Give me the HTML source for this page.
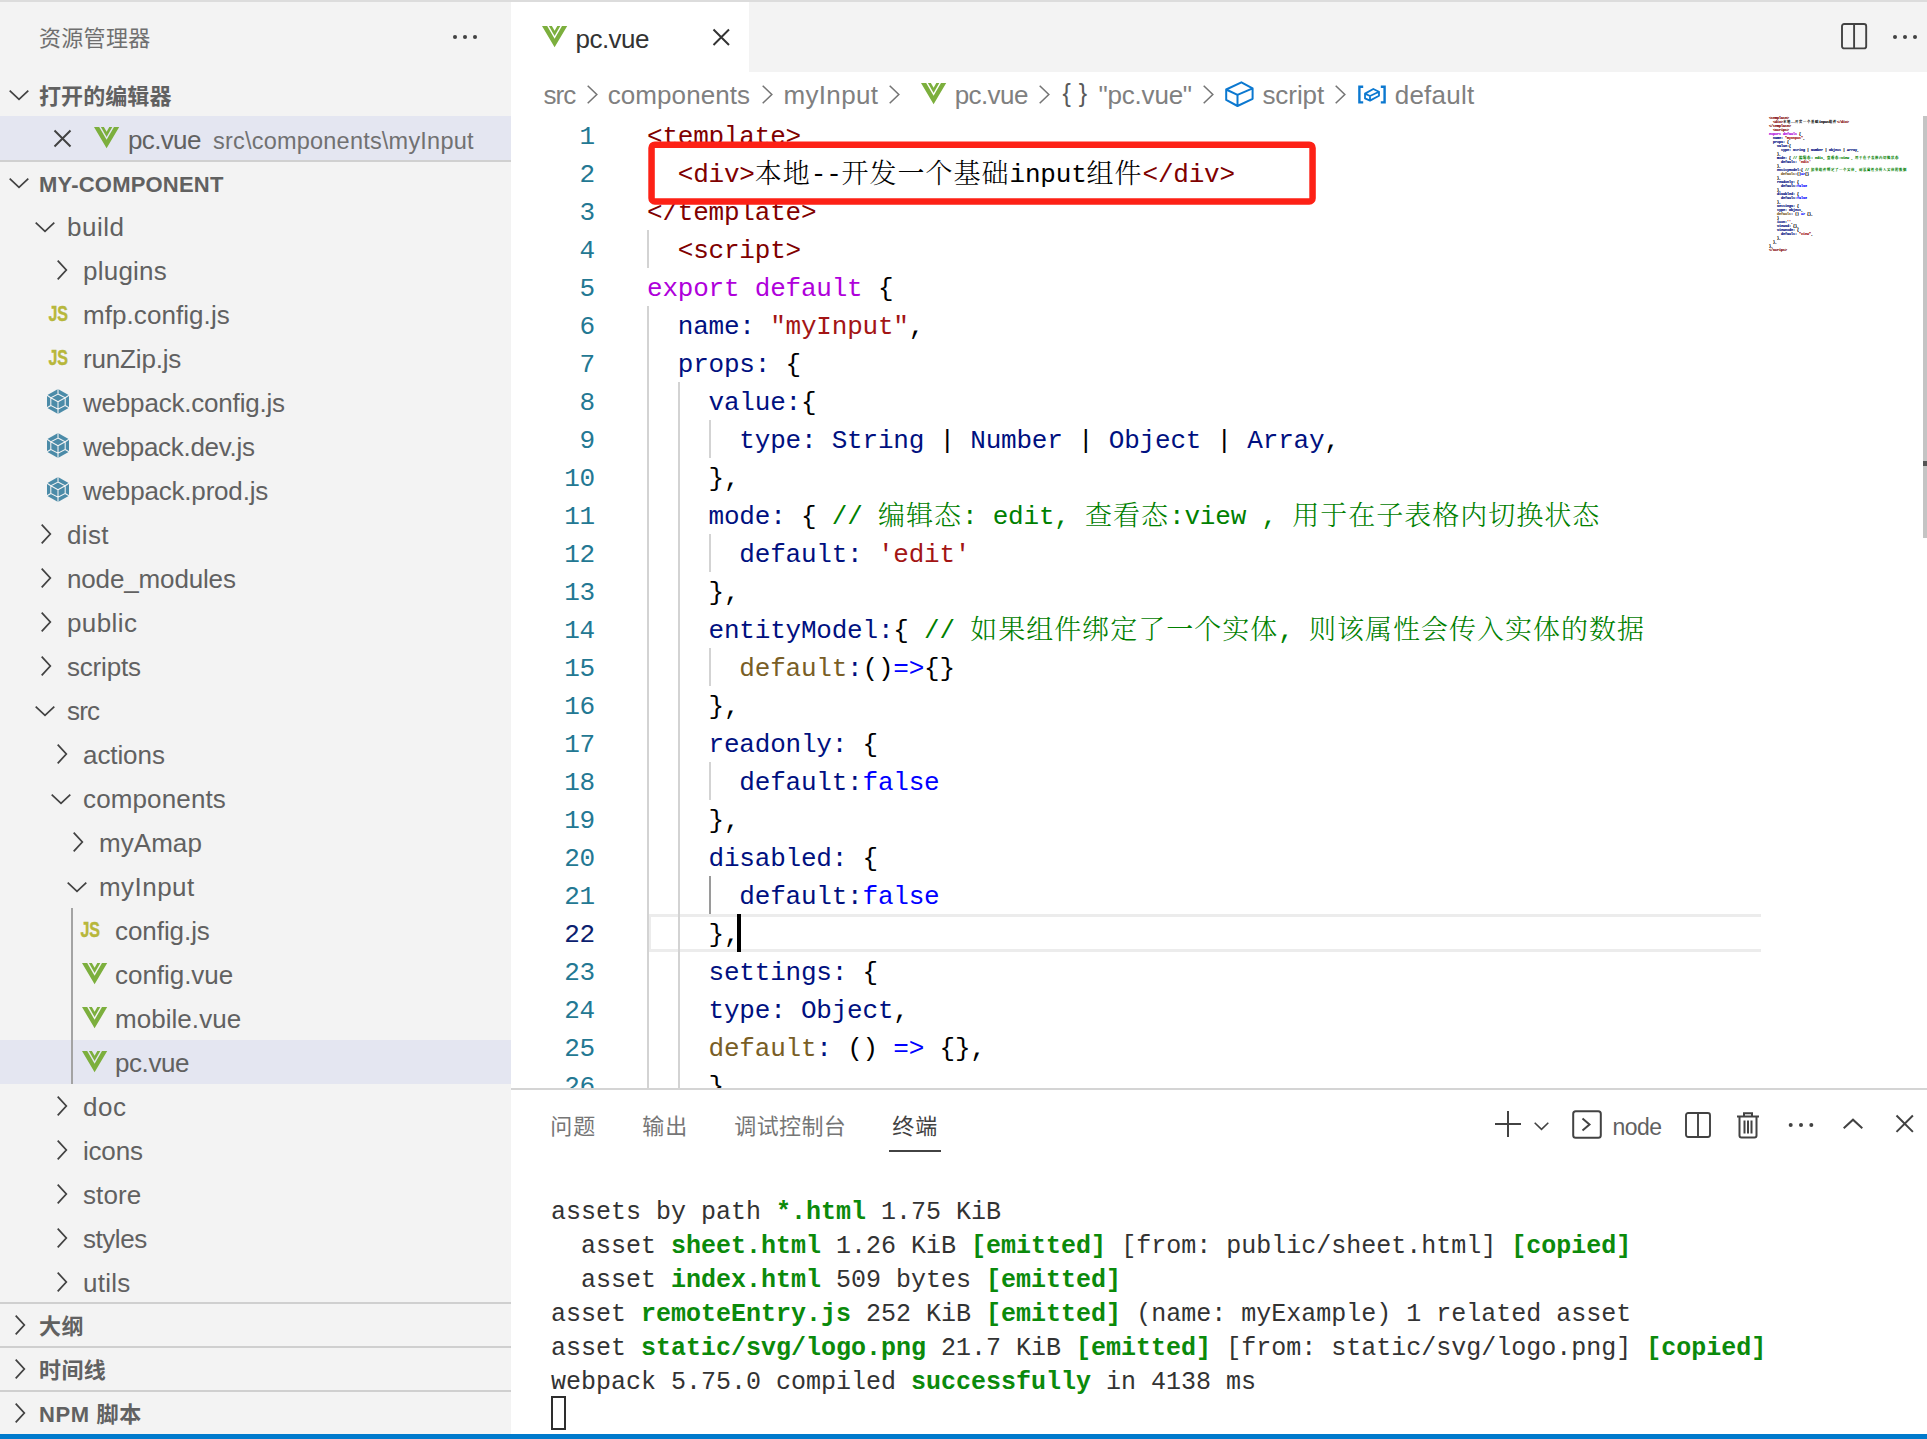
<!DOCTYPE html><html lang="zh-CN"><head><meta charset="utf-8"><title>pc.vue - my-component</title><style>
*{box-sizing:border-box;margin:0;padding:0}
html,body{width:1927px;height:1439px;overflow:hidden;background:#fff}
body{position:relative;font-family:"Liberation Sans","Noto Sans CJK SC",sans-serif;color:#616161;-webkit-font-smoothing:antialiased}
.abs{position:absolute}
.t{position:absolute;white-space:pre;line-height:44px;height:44px;font-size:26px;color:#616161}
.row{position:absolute;left:0;width:511px;height:44px}
.hdr{font-weight:bold;font-size:22px;color:#616161}
.ic{position:absolute;overflow:visible}
.code{position:absolute;left:647px;margin-top:2px;white-space:pre;font-family:"Liberation Mono","Noto Serif CJK SC",monospace;font-size:26px;letter-spacing:-0.21px;line-height:38px;height:38px;color:#000}
.cj{font-family:"Noto Serif CJK SC",serif;font-weight:300;font-size:27px;letter-spacing:1px;line-height:0;position:relative;top:0.5px}
.ln{position:absolute;left:511px;margin-top:2px;width:84px;text-align:right;white-space:pre;font-family:"Liberation Mono","Noto Serif CJK SC",monospace;font-size:26px;letter-spacing:-0.21px;line-height:38px;height:38px;color:#237893}
.g{position:absolute;width:2px;background:#d3d3d3}
.tm{position:absolute;left:551px;margin-top:0.5px;white-space:pre;font-family:"Liberation Mono","Noto Serif CJK SC",monospace;font-size:25px;line-height:34px;height:34px;color:#333}
.tm b{color:#0b8a0b;font-weight:bold}
.k{color:#af00db} .m{color:#800000} .p{color:#001080} .s{color:#a31515} .c{color:#008000} .b{color:#0000ff} .f{color:#795e26}
.mm{position:absolute;left:1769px;top:116px;-webkit-text-stroke:1px;transform-origin:0 0;transform:scale(0.1667);white-space:pre;font-family:"Liberation Mono","Noto Serif CJK SC",monospace;font-size:20px;line-height:24px;font-weight:bold;color:#000}
.mm .cj{font-size:20px;line-height:0;letter-spacing:4px;top:0}
.bc{position:absolute;top:73px;height:44px;line-height:44px;font-size:26px;color:#808080;white-space:pre}
.pt{position:absolute;margin-top:1px;top:1104px;height:44px;line-height:44px;font-size:22px;color:#767676;white-space:pre}
</style></head><body>
<div class="abs" style="left:0;top:0;width:511px;height:1439px;background:#f3f3f3"></div>
<div class="abs" style="left:511px;top:0;width:1416px;height:72px;background:#f3f3f3"></div>
<div class="abs" style="left:0;top:0;width:1927px;height:2px;background:#dcdcdc"></div>
<div class="abs" style="left:511px;top:2px;width:238px;height:70px;background:#fff"></div>
<div class="t" id="L1" style="left:39px;top:17px;letter-spacing:0.297px;font-size:22px;color:#6f6f6f">资源管理器</div>
<svg class="ic" style="left:451px;top:33px" width="28" height="8" viewBox="-14 -4 28 8"><circle cx="-10" cy="0" r="2.05" fill="#424242"/><circle cx="0" cy="0" r="2.05" fill="#424242"/><circle cx="10" cy="0" r="2.05" fill="#424242"/></svg>
<svg class="ic" style="left:7.0px;top:88.0px" width="24" height="14" viewBox="-2 -2 24 14"><path d="M0.7 0.7 L10.0 9.3 L19.3 0.7" fill="none" stroke="#424242" stroke-width="1.75"/></svg>
<div class="t hdr" id="L2" style="left:39px;top:75px;letter-spacing:0.081px;">打开的编辑器</div>
<div class="row" style="top:116px;background:#e4e6f1"></div>
<svg class="ic" style="left:52.4px;top:127.6px" width="21" height="21" viewBox="-2 -2 21 21"><path d="M0.5 0.5 L16.5 16.5 M16.5 0.5 L0.5 16.5" fill="none" stroke="#424242" stroke-width="2"/></svg>
<svg class="ic" style="left:94px;top:126.7px" width="25.2" height="21.3" viewBox="0 0 25.2 21.3"><path d="M0 0H5.2L12.6 12.8 20 0H25.2L12.6 21.3Z" fill="#7caf3d"/><path d="M6.9 0H9.9L12.6 4.7 15.3 0H18.3L12.6 9.9Z" fill="#7caf3d"/></svg>
<div class="t" id="L3" style="left:128px;top:118px;letter-spacing:-0.653px;">pc.vue</div>
<div class="t" id="L4" style="left:213px;top:119px;letter-spacing:0.214px;font-size:23.5px;color:#717171">src\components\myInput</div>
<div class="abs" style="left:0;top:160px;width:511px;height:2px;background:#d0d0d0"></div>
<svg class="ic" style="left:7.0px;top:176.0px" width="24" height="14" viewBox="-2 -2 24 14"><path d="M0.7 0.7 L10.0 9.3 L19.3 0.7" fill="none" stroke="#424242" stroke-width="1.75"/></svg>
<div class="t hdr" id="L5" style="left:39px;top:162.5px;letter-spacing:0.206px;">MY-COMPONENT</div>
<svg class="ic" style="left:33.0px;top:219.5px" width="24" height="14" viewBox="-2 -2 24 14"><path d="M0.7 0.7 L10.0 9.3 L19.3 0.7" fill="none" stroke="#424242" stroke-width="1.75"/></svg>
<div class="t" id="L6" style="left:67px;top:205px;letter-spacing:0.533px;">build</div>
<svg class="ic" style="left:54.5px;top:258.0px" width="14" height="24" viewBox="-2 -2 14 24"><path d="M0.7 0.7 L9.3 10.0 L0.7 19.3" fill="none" stroke="#424242" stroke-width="1.75"/></svg>
<div class="t" id="L7" style="left:83px;top:249px;letter-spacing:0.228px;">plugins</div>
<svg class="ic" style="left:46px;top:302.5px" width="24" height="24" viewBox="0 0 24 24"><text x="2.4" y="18.3" font-family='"Liberation Sans",sans-serif' font-weight="bold" font-size="22.6" fill="#b7b73b" stroke="#b7b73b" stroke-width="0.45" textLength="19.6" lengthAdjust="spacingAndGlyphs">JS</text></svg>
<div class="t" id="L8" style="left:83px;top:293px;letter-spacing:0.065px;">mfp.config.js</div>
<svg class="ic" style="left:46px;top:346.5px" width="24" height="24" viewBox="0 0 24 24"><text x="2.4" y="18.3" font-family='"Liberation Sans",sans-serif' font-weight="bold" font-size="22.6" fill="#b7b73b" stroke="#b7b73b" stroke-width="0.45" textLength="19.6" lengthAdjust="spacingAndGlyphs">JS</text></svg>
<div class="t" id="L9" style="left:83px;top:337px;letter-spacing:-0.167px;">runZip.js</div>
<svg class="ic" style="left:46px;top:388.2px" width="24" height="27" viewBox="-12 -13.5 24 27"><path d="M0 -12.4 L11 -6.2 L11 6.2 L0 12.4 L-11 6.2 L-11 -6.2Z" fill="#4b8ba8"/><path d="M0 -7.4 L7.2 -3.7 L7.2 4 L0 7.7 L-7.2 4 L-7.2 -3.7Z M0 0.2 L-7.2 -3.7 M0 0.2 L7.2 -3.7 M0 0.2 L0 7.7 M0 -12.4 L0 -7.4 M11 -6.2 L7.2 -3.7 M11 6.2 L7.2 4 M0 12.4 L0 7.7 M-11 6.2 L-7.2 4 M-11 -6.2 L-7.2 -3.7" fill="none" stroke="#f3f3f3" stroke-width="1.1"/></svg>
<div class="t" id="L10" style="left:83px;top:381px;letter-spacing:-0.195px;">webpack.config.js</div>
<svg class="ic" style="left:46px;top:432.2px" width="24" height="27" viewBox="-12 -13.5 24 27"><path d="M0 -12.4 L11 -6.2 L11 6.2 L0 12.4 L-11 6.2 L-11 -6.2Z" fill="#4b8ba8"/><path d="M0 -7.4 L7.2 -3.7 L7.2 4 L0 7.7 L-7.2 4 L-7.2 -3.7Z M0 0.2 L-7.2 -3.7 M0 0.2 L7.2 -3.7 M0 0.2 L0 7.7 M0 -12.4 L0 -7.4 M11 -6.2 L7.2 -3.7 M11 6.2 L7.2 4 M0 12.4 L0 7.7 M-11 6.2 L-7.2 4 M-11 -6.2 L-7.2 -3.7" fill="none" stroke="#f3f3f3" stroke-width="1.1"/></svg>
<div class="t" id="L11" style="left:83px;top:425px;letter-spacing:-0.303px;">webpack.dev.js</div>
<svg class="ic" style="left:46px;top:476.2px" width="24" height="27" viewBox="-12 -13.5 24 27"><path d="M0 -12.4 L11 -6.2 L11 6.2 L0 12.4 L-11 6.2 L-11 -6.2Z" fill="#4b8ba8"/><path d="M0 -7.4 L7.2 -3.7 L7.2 4 L0 7.7 L-7.2 4 L-7.2 -3.7Z M0 0.2 L-7.2 -3.7 M0 0.2 L7.2 -3.7 M0 0.2 L0 7.7 M0 -12.4 L0 -7.4 M11 -6.2 L7.2 -3.7 M11 6.2 L7.2 4 M0 12.4 L0 7.7 M-11 6.2 L-7.2 4 M-11 -6.2 L-7.2 -3.7" fill="none" stroke="#f3f3f3" stroke-width="1.1"/></svg>
<div class="t" id="L12" style="left:83px;top:469px;letter-spacing:-0.186px;">webpack.prod.js</div>
<svg class="ic" style="left:38.5px;top:522.0px" width="14" height="24" viewBox="-2 -2 14 24"><path d="M0.7 0.7 L9.3 10.0 L0.7 19.3" fill="none" stroke="#424242" stroke-width="1.75"/></svg>
<div class="t" id="L13" style="left:67px;top:513px;letter-spacing:0.358px;">dist</div>
<svg class="ic" style="left:38.5px;top:566.0px" width="14" height="24" viewBox="-2 -2 14 24"><path d="M0.7 0.7 L9.3 10.0 L0.7 19.3" fill="none" stroke="#424242" stroke-width="1.75"/></svg>
<div class="t" id="L14" style="left:67px;top:557px;letter-spacing:-0.149px;">node_modules</div>
<svg class="ic" style="left:38.5px;top:610.0px" width="14" height="24" viewBox="-2 -2 14 24"><path d="M0.7 0.7 L9.3 10.0 L0.7 19.3" fill="none" stroke="#424242" stroke-width="1.75"/></svg>
<div class="t" id="L15" style="left:67px;top:601px;letter-spacing:0.395px;">public</div>
<svg class="ic" style="left:38.5px;top:654.0px" width="14" height="24" viewBox="-2 -2 14 24"><path d="M0.7 0.7 L9.3 10.0 L0.7 19.3" fill="none" stroke="#424242" stroke-width="1.75"/></svg>
<div class="t" id="L16" style="left:67px;top:645px;letter-spacing:-0.189px;">scripts</div>
<svg class="ic" style="left:33.0px;top:703.5px" width="24" height="14" viewBox="-2 -2 24 14"><path d="M0.7 0.7 L10.0 9.3 L19.3 0.7" fill="none" stroke="#424242" stroke-width="1.75"/></svg>
<div class="t" id="L17" style="left:67px;top:689px;letter-spacing:-0.787px;">src</div>
<svg class="ic" style="left:54.5px;top:742.0px" width="14" height="24" viewBox="-2 -2 14 24"><path d="M0.7 0.7 L9.3 10.0 L0.7 19.3" fill="none" stroke="#424242" stroke-width="1.75"/></svg>
<div class="t" id="L18" style="left:83px;top:733px;letter-spacing:-0.084px;">actions</div>
<svg class="ic" style="left:49.0px;top:791.5px" width="24" height="14" viewBox="-2 -2 24 14"><path d="M0.7 0.7 L10.0 9.3 L19.3 0.7" fill="none" stroke="#424242" stroke-width="1.75"/></svg>
<div class="t" id="L19" style="left:83px;top:777px;letter-spacing:0.134px;">components</div>
<svg class="ic" style="left:70.5px;top:830.0px" width="14" height="24" viewBox="-2 -2 14 24"><path d="M0.7 0.7 L9.3 10.0 L0.7 19.3" fill="none" stroke="#424242" stroke-width="1.75"/></svg>
<div class="t" id="L20" style="left:99px;top:821px;letter-spacing:0.053px;">myAmap</div>
<svg class="ic" style="left:65.0px;top:879.5px" width="24" height="14" viewBox="-2 -2 24 14"><path d="M0.7 0.7 L10.0 9.3 L19.3 0.7" fill="none" stroke="#424242" stroke-width="1.75"/></svg>
<div class="t" id="L21" style="left:99px;top:865px;letter-spacing:0.459px;">myInput</div>
<svg class="ic" style="left:78px;top:918.5px" width="24" height="24" viewBox="0 0 24 24"><text x="2.4" y="18.3" font-family='"Liberation Sans",sans-serif' font-weight="bold" font-size="22.6" fill="#b7b73b" stroke="#b7b73b" stroke-width="0.45" textLength="19.6" lengthAdjust="spacingAndGlyphs">JS</text></svg>
<div class="t" id="L22" style="left:115px;top:909px;letter-spacing:-0.066px;">config.js</div>
<svg class="ic" style="left:82px;top:962.6px" width="25.2" height="21.3" viewBox="0 0 25.2 21.3"><path d="M0 0H5.2L12.6 12.8 20 0H25.2L12.6 21.3Z" fill="#7caf3d"/><path d="M6.9 0H9.9L12.6 4.7 15.3 0H18.3L12.6 9.9Z" fill="#7caf3d"/></svg>
<div class="t" id="L23" style="left:115px;top:953px;letter-spacing:-0.033px;">config.vue</div>
<svg class="ic" style="left:82px;top:1006.6px" width="25.2" height="21.3" viewBox="0 0 25.2 21.3"><path d="M0 0H5.2L12.6 12.8 20 0H25.2L12.6 21.3Z" fill="#7caf3d"/><path d="M6.9 0H9.9L12.6 4.7 15.3 0H18.3L12.6 9.9Z" fill="#7caf3d"/></svg>
<div class="t" id="L24" style="left:115px;top:997px;letter-spacing:0.046px;">mobile.vue</div>
<div class="row" style="top:1040px;background:#e4e6f1"></div>
<svg class="ic" style="left:82px;top:1050.6px" width="25.2" height="21.3" viewBox="0 0 25.2 21.3"><path d="M0 0H5.2L12.6 12.8 20 0H25.2L12.6 21.3Z" fill="#7caf3d"/><path d="M6.9 0H9.9L12.6 4.7 15.3 0H18.3L12.6 9.9Z" fill="#7caf3d"/></svg>
<div class="t" id="L25" style="left:115px;top:1041px;letter-spacing:-0.435px;">pc.vue</div>
<svg class="ic" style="left:54.5px;top:1094.0px" width="14" height="24" viewBox="-2 -2 14 24"><path d="M0.7 0.7 L9.3 10.0 L0.7 19.3" fill="none" stroke="#424242" stroke-width="1.75"/></svg>
<div class="t" id="L26" style="left:83px;top:1085px;letter-spacing:0.526px;">doc</div>
<svg class="ic" style="left:54.5px;top:1138.0px" width="14" height="24" viewBox="-2 -2 14 24"><path d="M0.7 0.7 L9.3 10.0 L0.7 19.3" fill="none" stroke="#424242" stroke-width="1.75"/></svg>
<div class="t" id="L27" style="left:83px;top:1129px;letter-spacing:-0.202px;">icons</div>
<svg class="ic" style="left:54.5px;top:1182.0px" width="14" height="24" viewBox="-2 -2 14 24"><path d="M0.7 0.7 L9.3 10.0 L0.7 19.3" fill="none" stroke="#424242" stroke-width="1.75"/></svg>
<div class="t" id="L28" style="left:83px;top:1173px;letter-spacing:0.099px;">store</div>
<svg class="ic" style="left:54.5px;top:1226.0px" width="14" height="24" viewBox="-2 -2 14 24"><path d="M0.7 0.7 L9.3 10.0 L0.7 19.3" fill="none" stroke="#424242" stroke-width="1.75"/></svg>
<div class="t" id="L29" style="left:83px;top:1217px;letter-spacing:-0.462px;">styles</div>
<svg class="ic" style="left:54.5px;top:1270.0px" width="14" height="24" viewBox="-2 -2 14 24"><path d="M0.7 0.7 L9.3 10.0 L0.7 19.3" fill="none" stroke="#424242" stroke-width="1.75"/></svg>
<div class="t" id="L30" style="left:83px;top:1261px;letter-spacing:0.250px;">utils</div>
<div class="abs" style="left:71px;top:908px;width:2px;height:176px;background:#a3a3a3"></div>
<div class="abs" style="left:0;top:1302px;width:511px;height:2px;background:#cfcfcf"></div>
<svg class="ic" style="left:12.5px;top:1313.3px" width="14" height="24" viewBox="-2 -2 14 24"><path d="M0.7 0.7 L9.3 10.0 L0.7 19.3" fill="none" stroke="#424242" stroke-width="1.75"/></svg>
<div class="t hdr" id="L31" style="left:39px;top:1305px;letter-spacing:0.400px;">大纲</div>
<div class="abs" style="left:0;top:1346px;width:511px;height:2px;background:#cfcfcf"></div>
<svg class="ic" style="left:12.5px;top:1357.3px" width="14" height="24" viewBox="-2 -2 14 24"><path d="M0.7 0.7 L9.3 10.0 L0.7 19.3" fill="none" stroke="#424242" stroke-width="1.75"/></svg>
<div class="t hdr" id="L32" style="left:39px;top:1349px;letter-spacing:0.396px;">时间线</div>
<div class="abs" style="left:0;top:1390px;width:511px;height:2px;background:#cfcfcf"></div>
<svg class="ic" style="left:12.5px;top:1401.3px" width="14" height="24" viewBox="-2 -2 14 24"><path d="M0.7 0.7 L9.3 10.0 L0.7 19.3" fill="none" stroke="#424242" stroke-width="1.75"/></svg>
<div class="t hdr" id="L33" style="left:39px;top:1393px;letter-spacing:0.632px;">NPM 脚本</div>
<svg class="ic" style="left:541.8px;top:25.6px" width="25.2" height="21.3" viewBox="0 0 25.2 21.3"><path d="M0 0H5.2L12.6 12.8 20 0H25.2L12.6 21.3Z" fill="#7caf3d"/><path d="M6.9 0H9.9L12.6 4.7 15.3 0H18.3L12.6 9.9Z" fill="#7caf3d"/></svg>
<div class="t" id="L34" style="left:575.6px;top:17px;letter-spacing:-0.568px;color:#333">pc.vue</div>
<svg class="ic" style="left:710.75px;top:26.75px" width="20.5" height="20.5" viewBox="-2 -2 20.5 20.5"><path d="M0.5 0.5 L16.0 16.0 M16.0 0.5 L0.5 16.0" fill="none" stroke="#333" stroke-width="2"/></svg>
<svg class="ic" style="left:1838.9px;top:20.7px" width="30.2" height="30.4" viewBox="-2 -2 30.2 30.4"><rect x="1" y="1" width="24.2" height="24.4" rx="2.2" fill="none" stroke="#424242" stroke-width="1.9"/><path d="M13.1 1V25.4" stroke="#424242" stroke-width="1.9"/></svg>
<svg class="ic" style="left:1891px;top:33px" width="28" height="8" viewBox="-14 -4 28 8"><circle cx="-10" cy="0" r="2" fill="#424242"/><circle cx="0" cy="0" r="2" fill="#424242"/><circle cx="10" cy="0" r="2" fill="#424242"/></svg>
<div class="bc" id="L35" style="left:543.5px;top:73px;letter-spacing:-0.953px;">src</div>
<svg class="ic" style="left:584.55px;top:83.1px" width="14.5" height="23" viewBox="-2 -2 14.5 23"><path d="M0.7 0.7 L9.8 9.5 L0.7 18.3" fill="none" stroke="#757575" stroke-width="1.55"/></svg>
<div class="bc" id="L36" style="left:607.7px;top:73px;letter-spacing:0.084px;">components</div>
<svg class="ic" style="left:760.05px;top:83.1px" width="14.5" height="23" viewBox="-2 -2 14.5 23"><path d="M0.7 0.7 L9.8 9.5 L0.7 18.3" fill="none" stroke="#757575" stroke-width="1.55"/></svg>
<div class="bc" id="L37" style="left:783.5px;top:73px;letter-spacing:0.329px;">myInput</div>
<svg class="ic" style="left:887.05px;top:83.1px" width="14.5" height="23" viewBox="-2 -2 14.5 23"><path d="M0.7 0.7 L9.8 9.5 L0.7 18.3" fill="none" stroke="#757575" stroke-width="1.55"/></svg>
<svg class="ic" style="left:920.7px;top:82.7px" width="25.2" height="21.3" viewBox="0 0 25.2 21.3"><path d="M0 0H5.2L12.6 12.8 20 0H25.2L12.6 21.3Z" fill="#7caf3d"/><path d="M6.9 0H9.9L12.6 4.7 15.3 0H18.3L12.6 9.9Z" fill="#7caf3d"/></svg>
<div class="bc" id="L38" style="left:954.7px;top:73px;letter-spacing:-0.584px;">pc.vue</div>
<svg class="ic" style="left:1036.55px;top:83.1px" width="14.5" height="23" viewBox="-2 -2 14.5 23"><path d="M0.7 0.7 L9.8 9.5 L0.7 18.3" fill="none" stroke="#757575" stroke-width="1.55"/></svg>
<div class="bc" id="L39" style="left:1062.5px;top:73px;letter-spacing:7.896px;color:#5a5a5a;font-size:25px;top:71px">{}</div>
<div class="bc" id="L40" style="left:1098.6px;top:73px;letter-spacing:-0.222px;">&quot;pc.vue&quot;</div>
<svg class="ic" style="left:1201.35px;top:83.1px" width="14.5" height="23" viewBox="-2 -2 14.5 23"><path d="M0.7 0.7 L9.8 9.5 L0.7 18.3" fill="none" stroke="#757575" stroke-width="1.55"/></svg>
<svg class="ic" style="left:1225px;top:81px" width="30" height="28" viewBox="0 0 30 28"><path d="M16.4 1.3 L27.6 7.4 L27.6 17.8 L12.5 25 L1.2 18.9 L1.2 8.5 Z M1.2 8.5 L12.5 13.9 L27.6 7.4 M12.5 13.9 L12.5 25" fill="none" stroke="#0b78d0" stroke-width="2" stroke-linejoin="round"/></svg>
<div class="bc" id="L41" style="left:1262.4px;top:73px;letter-spacing:-0.053px;">script</div>
<svg class="ic" style="left:1332.95px;top:83.1px" width="14.5" height="23" viewBox="-2 -2 14.5 23"><path d="M0.7 0.7 L9.8 9.5 L0.7 18.3" fill="none" stroke="#757575" stroke-width="1.55"/></svg>
<svg class="ic" style="left:1357px;top:83px" width="30" height="24" viewBox="0 0 30 24"><path d="M6.2 3.8 H2.4 V19.4 H6.2 M23.8 3.8 H27.6 V19.4 H23.8" fill="none" stroke="#0b78d0" stroke-width="2.4"/><path d="M16.3 6 L22 8.8 L22 12.8 L13 17.6 L8 15.4 L8 10.6 Z M8 10.6 L13 13 L22 8.8 M13 13 L13 17.6" fill="none" stroke="#0b78d0" stroke-width="1.8" stroke-linejoin="round"/></svg>
<div class="bc" id="L42" style="left:1394.7px;top:73px;letter-spacing:0.234px;">default</div>
<div class="abs" style="left:511px;top:116px;width:1416px;height:972px;overflow:hidden"><div class="abs" style="left:-511px;top:-116px;width:1927px;height:1439px">
<div class="abs" style="left:649px;top:914px;width:1112px;height:38px;border:3px solid #ececec;border-left-width:2px;border-right:0"></div>
<div class="ln" style="top:116px">1</div>
<div class="code" style="top:116px"><span class="m">&lt;template&gt;</span></div>
<div class="ln" style="top:154px">2</div>
<div class="code" style="top:154px">  <span class="m">&lt;div&gt;</span><span class="cj">本地</span>--<span class="cj">开发一个基础</span>input<span class="cj">组件</span><span class="m">&lt;/div&gt;</span></div>
<div class="ln" style="top:192px">3</div>
<div class="code" style="top:192px"><span class="m">&lt;/template&gt;</span></div>
<div class="g" style="left:647px;top:230px;height:38px;background:#d3d3d3"></div>
<div class="ln" style="top:230px">4</div>
<div class="code" style="top:230px">  <span class="m">&lt;script&gt;</span></div>
<div class="ln" style="top:268px">5</div>
<div class="code" style="top:268px"><span class="k">export default</span> {</div>
<div class="g" style="left:647px;top:306px;height:38px;background:#d3d3d3"></div>
<div class="ln" style="top:306px">6</div>
<div class="code" style="top:306px">  <span class="p">name:</span> <span class="s">"myInput"</span>,</div>
<div class="g" style="left:647px;top:344px;height:38px;background:#d3d3d3"></div>
<div class="ln" style="top:344px">7</div>
<div class="code" style="top:344px">  <span class="p">props:</span> {</div>
<div class="g" style="left:647px;top:382px;height:38px;background:#d3d3d3"></div>
<div class="g" style="left:678px;top:382px;height:38px;background:#d3d3d3"></div>
<div class="ln" style="top:382px">8</div>
<div class="code" style="top:382px">    <span class="p">value:</span>{</div>
<div class="g" style="left:647px;top:420px;height:38px;background:#d3d3d3"></div>
<div class="g" style="left:678px;top:420px;height:38px;background:#d3d3d3"></div>
<div class="g" style="left:709px;top:420px;height:38px;background:#d3d3d3"></div>
<div class="ln" style="top:420px">9</div>
<div class="code" style="top:420px">      <span class="p">type: String</span> | <span class="p">Number</span> | <span class="p">Object</span> | <span class="p">Array</span>,</div>
<div class="g" style="left:647px;top:458px;height:38px;background:#d3d3d3"></div>
<div class="g" style="left:678px;top:458px;height:38px;background:#d3d3d3"></div>
<div class="ln" style="top:458px">10</div>
<div class="code" style="top:458px">    },</div>
<div class="g" style="left:647px;top:496px;height:38px;background:#d3d3d3"></div>
<div class="g" style="left:678px;top:496px;height:38px;background:#d3d3d3"></div>
<div class="ln" style="top:496px">11</div>
<div class="code" style="top:496px">    <span class="p">mode:</span> { <span class="c">// <span class="cj">编辑态</span>: edit, <span class="cj">查看态</span>:view , <span class="cj">用于在子表格内切换状态</span></span></div>
<div class="g" style="left:647px;top:534px;height:38px;background:#d3d3d3"></div>
<div class="g" style="left:678px;top:534px;height:38px;background:#d3d3d3"></div>
<div class="g" style="left:709px;top:534px;height:38px;background:#d3d3d3"></div>
<div class="ln" style="top:534px">12</div>
<div class="code" style="top:534px">      <span class="p">default:</span> <span class="s">'edit'</span></div>
<div class="g" style="left:647px;top:572px;height:38px;background:#d3d3d3"></div>
<div class="g" style="left:678px;top:572px;height:38px;background:#d3d3d3"></div>
<div class="ln" style="top:572px">13</div>
<div class="code" style="top:572px">    },</div>
<div class="g" style="left:647px;top:610px;height:38px;background:#d3d3d3"></div>
<div class="g" style="left:678px;top:610px;height:38px;background:#d3d3d3"></div>
<div class="ln" style="top:610px">14</div>
<div class="code" style="top:610px">    <span class="p">entityModel:</span>{ <span class="c">// <span class="cj">如果组件绑定了一个实体</span>, <span class="cj">则该属性会传入实体的数据</span></span></div>
<div class="g" style="left:647px;top:648px;height:38px;background:#d3d3d3"></div>
<div class="g" style="left:678px;top:648px;height:38px;background:#d3d3d3"></div>
<div class="g" style="left:709px;top:648px;height:38px;background:#d3d3d3"></div>
<div class="ln" style="top:648px">15</div>
<div class="code" style="top:648px">      <span class="f">default</span><span class="p">:</span>()<span class="b">=&gt;</span>{}</div>
<div class="g" style="left:647px;top:686px;height:38px;background:#d3d3d3"></div>
<div class="g" style="left:678px;top:686px;height:38px;background:#d3d3d3"></div>
<div class="ln" style="top:686px">16</div>
<div class="code" style="top:686px">    },</div>
<div class="g" style="left:647px;top:724px;height:38px;background:#d3d3d3"></div>
<div class="g" style="left:678px;top:724px;height:38px;background:#d3d3d3"></div>
<div class="ln" style="top:724px">17</div>
<div class="code" style="top:724px">    <span class="p">readonly:</span> {</div>
<div class="g" style="left:647px;top:762px;height:38px;background:#d3d3d3"></div>
<div class="g" style="left:678px;top:762px;height:38px;background:#d3d3d3"></div>
<div class="g" style="left:709px;top:762px;height:38px;background:#d3d3d3"></div>
<div class="ln" style="top:762px">18</div>
<div class="code" style="top:762px">      <span class="p">default:</span><span class="b">false</span></div>
<div class="g" style="left:647px;top:800px;height:38px;background:#d3d3d3"></div>
<div class="g" style="left:678px;top:800px;height:38px;background:#d3d3d3"></div>
<div class="ln" style="top:800px">19</div>
<div class="code" style="top:800px">    },</div>
<div class="g" style="left:647px;top:838px;height:38px;background:#d3d3d3"></div>
<div class="g" style="left:678px;top:838px;height:38px;background:#d3d3d3"></div>
<div class="ln" style="top:838px">20</div>
<div class="code" style="top:838px">    <span class="p">disabled:</span> {</div>
<div class="g" style="left:647px;top:876px;height:38px;background:#d3d3d3"></div>
<div class="g" style="left:678px;top:876px;height:38px;background:#d3d3d3"></div>
<div class="g" style="left:709px;top:876px;height:38px;background:#9a9a9a"></div>
<div class="ln" style="top:876px">21</div>
<div class="code" style="top:876px">      <span class="p">default:</span><span class="b">false</span></div>
<div class="g" style="left:647px;top:914px;height:38px;background:#d3d3d3"></div>
<div class="g" style="left:678px;top:914px;height:38px;background:#d3d3d3"></div>
<div class="ln" style="top:914px;color:#0b216f">22</div>
<div class="code" style="top:914px">    },</div>
<div class="g" style="left:647px;top:952px;height:38px;background:#d3d3d3"></div>
<div class="g" style="left:678px;top:952px;height:38px;background:#d3d3d3"></div>
<div class="ln" style="top:952px">23</div>
<div class="code" style="top:952px">    <span class="p">settings:</span> {</div>
<div class="g" style="left:647px;top:990px;height:38px;background:#d3d3d3"></div>
<div class="g" style="left:678px;top:990px;height:38px;background:#d3d3d3"></div>
<div class="ln" style="top:990px">24</div>
<div class="code" style="top:990px">    <span class="p">type: Object</span>,</div>
<div class="g" style="left:647px;top:1028px;height:38px;background:#d3d3d3"></div>
<div class="g" style="left:678px;top:1028px;height:38px;background:#d3d3d3"></div>
<div class="ln" style="top:1028px">25</div>
<div class="code" style="top:1028px">    <span class="f">default</span><span class="p">:</span> () <span class="b">=&gt;</span> {},</div>
<div class="g" style="left:647px;top:1066px;height:38px;background:#d3d3d3"></div>
<div class="g" style="left:678px;top:1066px;height:38px;background:#d3d3d3"></div>
<div class="ln" style="top:1066px">26</div>
<div class="code" style="top:1066px">    }</div>
<svg class="ic" style="left:640px;top:136px" width="684" height="76" viewBox="640 136 684 76"><rect x="651.55" y="144.7" width="661" height="56.8" rx="3.25" fill="#fff" stroke="#fd2116" stroke-width="6.5"/></svg>
<div class="code" style="top:154px">  <span class="m">&lt;div&gt;</span><span class="cj">本地</span>--<span class="cj">开发一个基础</span>input<span class="cj">组件</span><span class="m">&lt;/div&gt;</span></div>
<div class="abs" style="left:737px;top:914px;width:4px;height:38px;background:#000"></div>
</div></div>
<div class="mm"><span class="m">&lt;template&gt;</span>
  <span class="m">&lt;div&gt;</span><span class="cj">本地</span>--<span class="cj">开发一个基础</span>input<span class="cj">组件</span><span class="m">&lt;/div&gt;</span>
<span class="m">&lt;/template&gt;</span>
  <span class="m">&lt;script&gt;</span>
<span class="k">export default</span> {
  <span class="p">name:</span> <span class="s">"myInput"</span>,
  <span class="p">props:</span> {
    <span class="p">value:</span>{
      <span class="p">type: String</span> | <span class="p">Number</span> | <span class="p">Object</span> | <span class="p">Array</span>,
    },
    <span class="p">mode:</span> { <span class="c">// <span class="cj">编辑态</span>: edit, <span class="cj">查看态</span>:view , <span class="cj">用于在子表格内切换状态</span></span>
      <span class="p">default:</span> <span class="s">'edit'</span>
    },
    <span class="p">entityModel:</span>{ <span class="c">// <span class="cj">如果组件绑定了一个实体</span>, <span class="cj">则该属性会传入实体的数据</span></span>
      <span class="f">default</span><span class="p">:</span>()<span class="b">=&gt;</span>{}
    },
    <span class="p">readonly:</span> {
      <span class="p">default:</span><span class="b">false</span>
    },
    <span class="p">disabled:</span> {
      <span class="p">default:</span><span class="b">false</span>
    },
    <span class="p">settings:</span> {
    <span class="p">type: Object</span>,
    <span class="f">default</span><span class="p">:</span> () <span class="b">=&gt;</span> {},
    }
    <span class="p">icon:</span><span class="s">''</span>,
    <span class="p">viewId:</span> {},
    <span class="p">viewCode:</span> {
      <span class="p">default:</span> <span class="s">"view"</span>,
    },
  },
},
<span class="m">&lt;/script&gt;</span></div>
<div class="abs" style="left:1923px;top:116px;width:4px;height:422px;background:#c4c4c4"></div>
<div class="abs" style="left:1923px;top:461px;width:4px;height:5px;background:#555"></div>
<div class="abs" style="left:511px;top:1088px;width:1416px;height:2px;background:#d4d4d4"></div>
<div class="pt" id="L43" style="left:550.3px;top:1104px;letter-spacing:0.942px;">问题</div>
<div class="pt" id="L44" style="left:642.3px;top:1104px;letter-spacing:0.942px;">输出</div>
<div class="pt" id="L45" style="left:734.3px;top:1104px;letter-spacing:0.377px;">调试控制台</div>
<div class="pt" id="L46" style="left:892.3px;top:1104px;letter-spacing:0.942px;color:#424242">终端</div>
<div class="abs" style="left:889px;top:1149.5px;width:52px;height:2px;background:#424242"></div>
<svg class="ic" style="left:1493.2px;top:1109.2px" width="30" height="30" viewBox="0 0 30 30"><path d="M15 2V28M2 15H28" stroke="#424242" stroke-width="2" fill="none"/></svg>
<svg class="ic" style="left:1532.0px;top:1119.8px" width="19" height="12" viewBox="-2 -2 19 12"><path d="M0.7 0.7 L7.5 7.3 L14.3 0.7" fill="none" stroke="#424242" stroke-width="1.6"/></svg>
<svg class="ic" style="left:1572.3px;top:1110.4px" width="30" height="29" viewBox="0 0 30 29"><rect x="1.2" y="1.2" width="27.6" height="26.6" rx="2.5" fill="none" stroke="#424242" stroke-width="2"/><path d="M10.5 8.5 L17.5 14.5 L10.5 20.5" fill="none" stroke="#424242" stroke-width="2"/></svg>
<div class="pt" id="L47" style="left:1612.5px;top:1104px;letter-spacing:-0.543px;font-size:23px;color:#616161">node</div>
<svg class="ic" style="left:1683.0px;top:1110.0px" width="30" height="30" viewBox="-2 -2 30 30"><rect x="1" y="1" width="24" height="24" rx="2.2" fill="none" stroke="#424242" stroke-width="1.9"/><path d="M13.0 1V25" stroke="#424242" stroke-width="1.9"/></svg>
<svg class="ic" style="left:1736px;top:1111px" width="24" height="28" viewBox="0 0 24 28"><path d="M1 5.5H23 M8 5V2.2H16V5 M3.5 5.5V24.5Q3.5 26.5 5.5 26.5H18.5Q20.5 26.5 20.5 24.5V5.5 M8.5 9.5V22.5 M12 9.5V22.5 M15.5 9.5V22.5" fill="none" stroke="#424242" stroke-width="2"/></svg>
<svg class="ic" style="left:1787px;top:1120.8px" width="28" height="8" viewBox="-14 -4 28 8"><circle cx="-10.3" cy="0" r="2" fill="#424242"/><circle cx="0" cy="0" r="2" fill="#424242"/><circle cx="10.3" cy="0" r="2" fill="#424242"/></svg>
<svg class="ic" style="left:1841.0px;top:1117.0px" width="24" height="14" viewBox="-2 -2 24 14"><path d="M0.7 9.3 L10.0 0.7 L19.3 9.3" fill="none" stroke="#424242" stroke-width="2"/></svg>
<svg class="ic" style="left:1894.3px;top:1113.3px" width="21.4" height="21.4" viewBox="-2 -2 21.4 21.4"><path d="M0.5 0.5 L16.9 16.9 M16.9 0.5 L0.5 16.9" fill="none" stroke="#424242" stroke-width="2"/></svg>
<div class="tm" style="top:1195px">assets by path <b>*.html</b> 1.75 KiB</div>
<div class="tm" style="top:1229px">  asset <b>sheet.html</b> 1.26 KiB <b>[emitted]</b> [from: public/sheet.html] <b>[copied]</b></div>
<div class="tm" style="top:1263px">  asset <b>index.html</b> 509 bytes <b>[emitted]</b></div>
<div class="tm" style="top:1297px">asset <b>remoteEntry.js</b> 252 KiB <b>[emitted]</b> (name: myExample) 1 related asset</div>
<div class="tm" style="top:1331px">asset <b>static/svg/logo.png</b> 21.7 KiB <b>[emitted]</b> [from: static/svg/logo.png] <b>[copied]</b></div>
<div class="tm" style="top:1365px">webpack 5.75.0 compiled <b>successfully</b> in 4138 ms</div>
<div class="abs" style="left:551px;top:1396px;width:15px;height:34px;border:2px solid #2e2e2e"></div>
<div class="abs" style="left:0;top:1434px;width:1927px;height:5px;background:#007acc"></div>
</body></html>
